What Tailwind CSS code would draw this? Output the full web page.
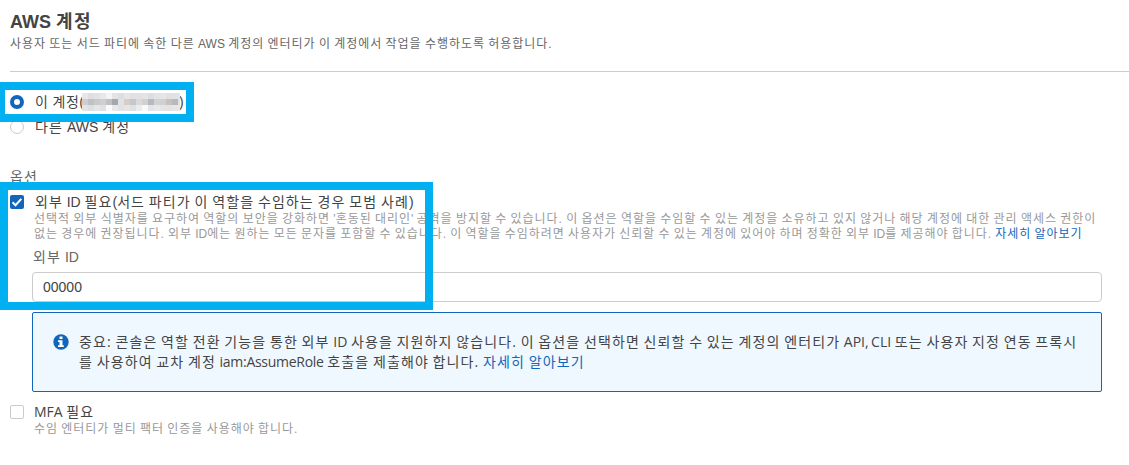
<!DOCTYPE html>
<html lang="ko">
<head>
  <meta charset="UTF-8" />
  <meta name="viewport" content="width=device-width, initial-scale=1.0" />
  <title>AWS 계정</title>
  <script src="https://cdn.jsdelivr.net/npm/@tailwindcss/browser@4"></script>
</head>
<body class="relative h-[465px] overflow-hidden bg-white font-['Liberation_Sans','Noto_Sans_CJK_KR',sans-serif] text-sm text-[#444] whitespace-nowrap">

  <!-- Section header -->
  <header class="ml-2.5 h-[72px] pt-[11px] border-b border-[#ccc]">
    <h1 class="h-[22px] text-lg leading-[22px] font-bold">AWS <span class="tracking-[0.08em]">계정</span></h1>
    <p class="h-[22px] text-xs leading-[22px] tracking-[0.08em] [word-spacing:-0.08em] text-[#666]">사용자 또는 서드 파티에 속한 다른 <span class="tracking-normal">AWS</span> 계정의 엔터티가 이 계정에서 작업을 수행하도록 허용합니다.</p>
  </header>

  <!-- Account choice -->
  <section class="ml-2.5 pt-[17px]">
    <label class="flex h-[25px] items-center">
      <span class="size-3.5 rounded-full border-[4px] border-[#1166bb]"></span>
      <span class="ml-[11px] w-[47px] tracking-[0.03em]">이 계정(</span>
      <span id="accountId" class="z-10 grid w-[98px] grid-cols-[repeat(16,6px)_2px] grid-rows-[6px_6px_6px] bg-[#e4e4e4]"></span>
      <span class="-ml-px">)</span>
    </label>
    <label class="flex h-[25px] items-center">
      <span class="size-3.5 rounded-full border border-[#ccc]"></span>
      <span class="ml-[11px] tracking-[0.08em] [word-spacing:-0.08em]">다른 <span class="tracking-normal">AWS</span> 계정</span>
    </label>
  </section>

  <!-- Options -->
  <section class="ml-2.5 pt-7">
    <h2 class="h-5 leading-5 tracking-[0.08em] text-[#666]">옵션</h2>
    <label class="mt-[5px] flex h-5 items-center">
      <span class="flex size-3.5 items-center justify-center rounded-[2px] bg-[#1166bb]">
        <svg class="size-3.5" viewBox="0 0 14 14" fill="none" stroke="#fff" stroke-width="2"><path d="M2.5 7.3 5.5 10.2 11.3 3.8" /></svg>
      </span>
      <span class="ml-[11px] tracking-[0.076em] [word-spacing:-0.08em]">외부 <span class="tracking-normal">ID</span> 필요<span class="tracking-normal">(</span>서드 파티가 이 역할을 수임하는 경우 모범 사례)</span>
    </label>
    <p class="ml-6 text-xs leading-[15px] tracking-[0.08em] [word-spacing:-0.08em] text-[#999]">
      선택적 외부 식별자를 요구하여 역할의 보안을 강화하면 <span class="tracking-normal">'</span>혼동된 대리인<span class="tracking-normal">'</span> 공격을 방지할 수 있습니다. 이 옵션은 역할을 수임할 수 있는 계정을 소유하고 있지 않거나 해당 계정에 대한 관리 액세스 권한이<br />
      <span class="tracking-[0.078em]">없는 경우에 권장됩니다. 외부 <span class="tracking-normal">ID</span>에는 원하는 모든 문자를 포함할 수 있습니다. 이 역할을 수임하려면 사용자가 신뢰할 수 있는 계정에 있어야 하며 정확한 외부 <span class="tracking-normal">ID</span>를 제공해야 합니다. <a class="text-[#1166bb]">자세히 알아보기</a></span>
    </p>
    <div class="ml-[22px] w-[1070px]">
      <p class="mt-[5px] ml-px h-[25px] leading-5 tracking-[0.08em] [word-spacing:-0.08em] text-[#666]">외부 <span class="tracking-normal">ID</span></p>
      <div class="flex h-[30px] items-center rounded border border-[#ccc] px-2.5">00000</div>
      <div class="mt-2.5 flex h-20 rounded-[2px] border border-[#1166bb] bg-[#f0f8ff] pt-[19px] pl-5 font-['Open_Sans','Noto_Sans_CJK_KR',sans-serif]">
        <svg class="mt-0.5 size-4 shrink-0" viewBox="0 0 16 16"><circle cx="8" cy="8" r="7.7" fill="#1166bb" /><path fill="#fff" d="M6.5 2.5h3V5h-3zM5 6.3h4.500v5h1.300V13H5v-1.700h1.500V8H5z" /></svg>
        <p class="ml-2.5 leading-5 tracking-[0.08em] [word-spacing:-0.08em]">
          중요: 콘솔은 역할 전환 기능을 통한 외부 <span class="tracking-normal">ID</span> 사용을 지원하지 않습니다. 이 옵션을 선택하면 신뢰할 수 있는 계정의 엔터티가 <span class="tracking-normal">API, CLI</span> 또는 사용자 지정 연동 프록시<br />
          를 사용하여 교차 계정 <span class="tracking-[-0.02em]">iam:AssumeRole</span> 호출을 제출해야 합니다. <a class="text-[#1166bb]">자세히 알아보기</a>
        </p>
      </div>
    </div>
    <label class="mt-2.5 flex h-5 items-center">
      <span class="size-3.5 rounded-[2px] border border-[#ccc]"></span>
      <span class="ml-2.5 font-['Open_Sans','Noto_Sans_CJK_KR',sans-serif]">MFA <span class="tracking-[0.08em]">필요</span></span>
    </label>
    <p class="-mt-px ml-6 text-xs leading-4 tracking-[0.08em] [word-spacing:-0.08em] text-[#999]">수임 엔터티가 멀티 팩터 인증을 사용해야 합니다.</p>
  </section>

  <!-- Highlight frames -->
  <div class="absolute top-[82px] -left-[3px] h-10 w-[197px] border-8 border-[#00b0f0]"></div>
  <div class="absolute top-[182px] left-0 h-32 w-[433px] border-8 border-[#00b0f0]"></div>

  <script>
    // Pixelated account number, one row of blocks per line
    const blocks = [
      "e8e6e6 dedfe3 e0e2e8 e8e8ea f4f4f4 e4e4e4 dcdee2 e6e6e4 e6dfdf e2e2e4 e4e4e4 dedede e2e4e6 e6e6e6 e4e0e0 e2e2e4 e4e4e4",
      "d0cdcd bfc2c4 c8cac8 cfcfcf c0c0c2 a5a8ab dfe3e8 d8cdc6 c2c9cc dadada d2d0d0 b8b8c0 d2d2d2 d0d0d0 cabfbd b5b8bc e0e0e0",
      "e4e4e4 dcdfe3 e6e6e6 dfe1e5 fafafa e8e8e8 dfe2e6 e8e4e4 dee0e4 ececec f6fafc e2e4e8 e8e8e8 e4e4e4 e4e2e2 e6e6e6 e8e8e8"
    ];
    const accountId = document.getElementById("accountId");
    blocks.join(" ").split(" ").forEach(color => {
      const block = document.createElement("span");
      block.style.backgroundColor = "#" + color;
      accountId.appendChild(block);
    });
  </script>
</body>
</html>
